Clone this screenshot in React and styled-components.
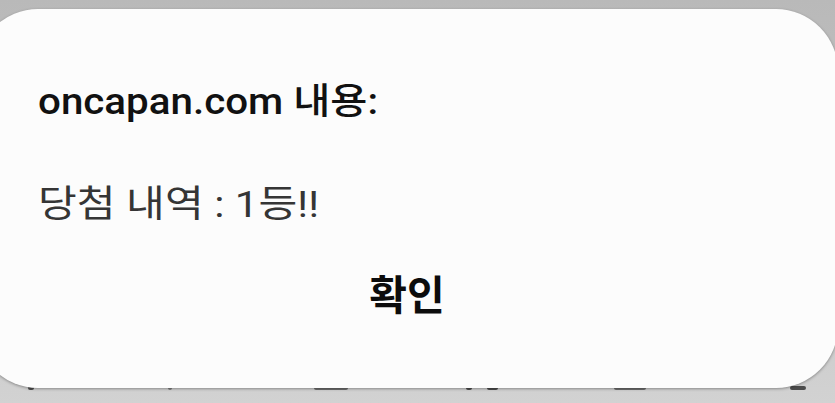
import React from 'react';
import styled, { createGlobalStyle } from 'styled-components';

const GlobalStyle = createGlobalStyle`
  html, body {
    margin: 0;
    padding: 0;
    background: #c4c4c4;
  }
`;

const Screen = styled.div`
  width: 835px;
  height: 403px;
  overflow: hidden;
  position: relative;
  padding-top: 9px;
  box-sizing: border-box;
  background: linear-gradient(180deg, #b9b9b9 0%, #c6c6c6 60%, #d2d2d2 100%);
`;

const PeekMark = styled.span`
  position: absolute;
  top: 386px;
  height: 4px;
  border-radius: 2px;
  background: #2a2a2a;
  opacity: ${(p) => p.$fade || 0.8};
`;

const Dialog = styled.section`
  position: relative;
  z-index: 1;
  margin-left: -24px;
  width: 862px;
  height: 379px;
  box-sizing: border-box;
  padding: 75px 0 0 62px;
  border-radius: 62px;
  background: #fcfcfc;
  box-shadow: 0 1px 3px rgba(0, 0, 0, 0.35);
  display: flex;
  flex-direction: column;
  font-family: Roboto, "Noto Sans CJK KR", sans-serif;
`;

const Title = styled.h2`
  margin: 0;
  font-size: 36px;
  line-height: 1;
  font-weight: 500;
  color: #111111;
  transform: scaleX(1.12);
  transform-origin: left center;
`;

const Message = styled.p`
  margin: 66px 0 0;
  font-size: 37px;
  line-height: 1;
  font-weight: 400;
  color: #353535;
  transform: scaleX(1.14);
  transform-origin: left center;
`;

const Actions = styled.div`
  display: flex;
  justify-content: center;
  margin: 53px 0 0 -62px;
`;

const ConfirmButton = styled.button`
  border: 0;
  padding: 0;
  background: none;
  font-family: Roboto, "Noto Sans CJK KR", sans-serif;
  font-size: 41px;
  line-height: 1;
  font-weight: 700;
  color: #0c0c0c;
  cursor: pointer;
`;

const marks = [
  { left: 28, width: 6 },
  { left: 168, width: 4, fade: 0.5 },
  { left: 314, width: 34, fade: 0.6 },
  { left: 466, width: 6 },
  { left: 487, width: 11 },
  { left: 614, width: 32, fade: 0.6 },
  { left: 790, width: 16 },
];

export default function App() {
  return (
    <>
      <GlobalStyle />
      <Screen>
        {marks.map((m, i) => (
          <PeekMark key={i} $fade={m.fade} style={{ left: m.left, width: m.width }} />
        ))}
        <Dialog>
          <Title>oncapan.com 내용:</Title>
          <Message>당첨 내역 : 1등!!</Message>
          <Actions>
            <ConfirmButton>확인</ConfirmButton>
          </Actions>
        </Dialog>
      </Screen>
    </>
  );
}
